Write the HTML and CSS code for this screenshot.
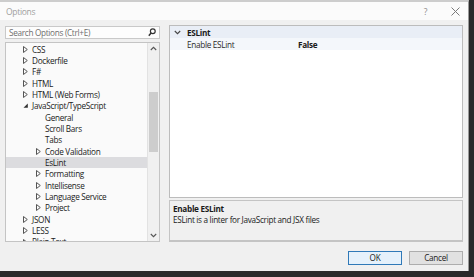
FILE: index.html
```html
<!DOCTYPE html>
<html>
<head>
<meta charset="utf-8">
<link rel="stylesheet" href="styles.css">
</head>
<body>
<div class="dialog">
  <div class="titlebar">
    <span class="title">Options</span>
    <span class="help">?</span>
    <svg class="close" width="9" height="9" viewBox="0 0 9 9"><path d="M0.5 0.5 L8.5 8.5 M8.5 0.5 L0.5 8.5" stroke="#7a7a7a" stroke-width="1" fill="none"/></svg>
  </div>
  <div class="client">
    <div class="main">
      <div class="left">
        <div class="search">
          <span class="placeholder">Search Options (Ctrl+E)</span>
          <svg class="mag" width="8" height="9" viewBox="0 0 8 9"><circle cx="4.8" cy="3.2" r="2.4" stroke="#333" stroke-width="1.2" fill="none"/><path d="M3.1 5 L0.8 7.8" stroke="#333" stroke-width="1.5"/></svg>
        </div>
        <div class="tree">
          <div class="rows">
            <div class="row l1"><svg class="arr" width="5" height="7" viewBox="0 0 5 7"><path d="M0.5 0.5 L4.3 3.5 L0.5 6.5 Z" stroke="#555" fill="none"/></svg>CSS</div>
            <div class="row l1"><svg class="arr" width="5" height="7" viewBox="0 0 5 7"><path d="M0.5 0.5 L4.3 3.5 L0.5 6.5 Z" stroke="#555" fill="none"/></svg>Dockerfile</div>
            <div class="row l1"><svg class="arr" width="5" height="7" viewBox="0 0 5 7"><path d="M0.5 0.5 L4.3 3.5 L0.5 6.5 Z" stroke="#555" fill="none"/></svg>F#</div>
            <div class="row l1"><svg class="arr" width="5" height="7" viewBox="0 0 5 7"><path d="M0.5 0.5 L4.3 3.5 L0.5 6.5 Z" stroke="#555" fill="none"/></svg>HTML</div>
            <div class="row l1"><svg class="arr" width="5" height="7" viewBox="0 0 5 7"><path d="M0.5 0.5 L4.3 3.5 L0.5 6.5 Z" stroke="#555" fill="none"/></svg>HTML (Web Forms)</div>
            <div class="row l1"><svg class="arr" width="5" height="7" viewBox="0 0 5 7"><path d="M4.8 1.5 L4.8 5.8 L0.5 5.8 Z" fill="#333"/></svg>JavaScript/TypeScript</div>
            <div class="row l2"><span class="noarr"></span>General</div>
            <div class="row l2"><span class="noarr"></span>Scroll Bars</div>
            <div class="row l2"><span class="noarr"></span>Tabs</div>
            <div class="row l2"><svg class="arr" width="5" height="7" viewBox="0 0 5 7"><path d="M0.5 0.5 L4.3 3.5 L0.5 6.5 Z" stroke="#555" fill="none"/></svg>Code Validation</div>
            <div class="row l2 sel"><span class="noarr"></span>EsLint</div>
            <div class="row l2"><svg class="arr" width="5" height="7" viewBox="0 0 5 7"><path d="M0.5 0.5 L4.3 3.5 L0.5 6.5 Z" stroke="#555" fill="none"/></svg>Formatting</div>
            <div class="row l2"><svg class="arr" width="5" height="7" viewBox="0 0 5 7"><path d="M0.5 0.5 L4.3 3.5 L0.5 6.5 Z" stroke="#555" fill="none"/></svg>Intellisense</div>
            <div class="row l2"><svg class="arr" width="5" height="7" viewBox="0 0 5 7"><path d="M0.5 0.5 L4.3 3.5 L0.5 6.5 Z" stroke="#555" fill="none"/></svg>Language Service</div>
            <div class="row l2"><svg class="arr" width="5" height="7" viewBox="0 0 5 7"><path d="M0.5 0.5 L4.3 3.5 L0.5 6.5 Z" stroke="#555" fill="none"/></svg>Project</div>
            <div class="row l1"><svg class="arr" width="5" height="7" viewBox="0 0 5 7"><path d="M0.5 0.5 L4.3 3.5 L0.5 6.5 Z" stroke="#555" fill="none"/></svg>JSON</div>
            <div class="row l1"><svg class="arr" width="5" height="7" viewBox="0 0 5 7"><path d="M0.5 0.5 L4.3 3.5 L0.5 6.5 Z" stroke="#555" fill="none"/></svg>LESS</div>
            <div class="row l1"><svg class="arr" width="5" height="7" viewBox="0 0 5 7"><path d="M0.5 0.5 L4.3 3.5 L0.5 6.5 Z" stroke="#555" fill="none"/></svg>Plain Text</div>
          </div>
          <div class="scrollbar">
            <svg class="sarrow" width="7" height="5" viewBox="0 0 7 5"><path d="M0.8 4 L3.5 1.3 L6.2 4" stroke="#555" stroke-width="1.1" fill="none"/></svg>
            <div class="track"><div class="thumb"></div></div>
            <svg class="sarrow" width="7" height="5" viewBox="0 0 7 5"><path d="M0.8 1 L3.5 3.7 L6.2 1" stroke="#555" stroke-width="1.1" fill="none"/></svg>
          </div>
        </div>
      </div>
      <div class="right">
        <div class="grid">
          <div class="cat">
            <svg class="chev" width="7" height="5" viewBox="0 0 7 5"><path d="M0.8 1 L3.5 3.7 L6.2 1" stroke="#444" stroke-width="1.1" fill="none"/></svg>
            <span class="catname">ESLint</span>
          </div>
          <div class="prop">
            <span class="pname">Enable ESLint</span>
            <span class="pval">False</span>
          </div>
        </div>
        <div class="desc">
          <div class="dtitle">Enable ESLint</div>
          <div class="dtext">ESLint is a linter for JavaScript and JSX files</div>
        </div>
      </div>
    </div>
    <div class="buttons">
      <div class="btn ok">OK</div>
      <div class="btn">Cancel</div>
    </div>
  </div>
</div>
</body>
</html>
```
FILE: styles.css
```css
html, body {
  margin: 0;
  padding: 0;
}
body {
  width: 474px;
  height: 277px;
  background: #2a2a2a;
  overflow: hidden;
  font-family: "Open Sans", "Noto Sans", sans-serif;
  font-size: 8.2px;
  letter-spacing: -0.3px;
  color: #1a1a1a;
}
.dialog {
  width: 468px;
  height: 269px;
  border-top: 2px solid #cdcdcd;
  border-right: 1px solid #9a9a9a;
  background: #f0f0f0;
  display: flex;
  flex-direction: column;
}
.titlebar {
  height: 18px;
  background: #fbfbfb;
  display: flex;
  align-items: center;
  padding-left: 6px;
  padding-right: 8px;
}
.title {
  color: #a0a0a0;
  font-size: 8.5px;
  flex: 1;
}
.help {
  color: #8a8a8a;
  font-size: 8.5px;
  margin-right: 24px;
}
.close {
  display: block;
}
.client {
  flex: 1;
  display: flex;
  flex-direction: column;
  padding: 5px 5px 0 5px;
}
.main {
  display: flex;
  gap: 9px;
}
.left {
  width: 155px;
  display: flex;
  flex-direction: column;
  padding-top: 1px;
}
.search {
  height: 11px;
  border: 1px solid #c9c9c9;
  background: #fdfdfd;
  display: flex;
  align-items: center;
  padding: 0 3px 0 3px;
}
.placeholder {
  flex: 1;
  color: #6e6e6e;
}
.mag {
  display: block;
}
.tree {
  margin-top: 3px;
  height: 198px;
  border: 1px solid #c4c4c4;
  background: #fafafa;
  display: flex;
  overflow: hidden;
}
.rows {
  flex: 1;
  display: flex;
  flex-direction: column;
  padding-top: 0.5px;
}
.row {
  height: 11.35px;
  line-height: 11.35px;
  display: flex;
  align-items: center;
  white-space: nowrap;
  flex-shrink: 0;
}
.row.l1 {
  padding-left: 17px;
}
.row.l2 {
  padding-left: 30px;
}
.arr {
  display: block;
  margin-right: 4px;
  width: 5px;
  flex-shrink: 0;
}
.noarr {
  width: 9px;
  flex-shrink: 0;
}
.row.sel {
  background: #dcdcdf;
}
.scrollbar {
  width: 11px;
  background: #f0f0f0;
  border-left: 1px solid #e2e2e2;
  display: flex;
  flex-direction: column;
  align-items: center;
}
.sarrow {
  display: block;
  margin: 3px 0;
}
.track {
  flex: 1;
  width: 100%;
  padding-top: 38px;
}
.thumb {
  height: 60px;
  margin: 0 1px;
  background: #cdcdcd;
}
.right {
  flex: 1;
  display: flex;
  flex-direction: column;
}
.grid {
  height: 171px;
  border: 1px solid #bcbcbc;
  background: #ffffff;
}
.cat {
  height: 12px;
  background: #e9eef6;
  display: flex;
  align-items: center;
  padding-left: 4px;
}
.chev {
  display: block;
  margin-right: 6px;
}
.catname {
  font-weight: bold;
}
.prop {
  height: 12px;
  background: #f4f7fb;
  display: flex;
  align-items: center;
  padding-left: 17px;
}
.pname {
  width: 111px;
  color: #2a2a2a;
}
.pval {
  font-weight: bold;
}
.desc {
  margin-top: 2px;
  border: 1px solid #c4c4c4;
  border-bottom: 2px solid #c4c4c4;
  background: #f0f0f0;
  padding: 2px 3px;
  box-sizing: border-box;
  height: 42px;
}
.dtitle {
  font-weight: bold;
  line-height: 11px;
}
.dtext {
  line-height: 12px;
}
.buttons {
  margin-top: 9px;
  display: flex;
  justify-content: flex-end;
  gap: 7px;
  padding-right: 0;
}
.btn {
  width: 52px;
  height: 12px;
  line-height: 12px;
  text-align: center;
  background: #e1e1e1;
  border: 1px solid #adadad;
}
.btn.ok {
  background: #e5f1fb;
  border-color: #2f79b8;
}
```
